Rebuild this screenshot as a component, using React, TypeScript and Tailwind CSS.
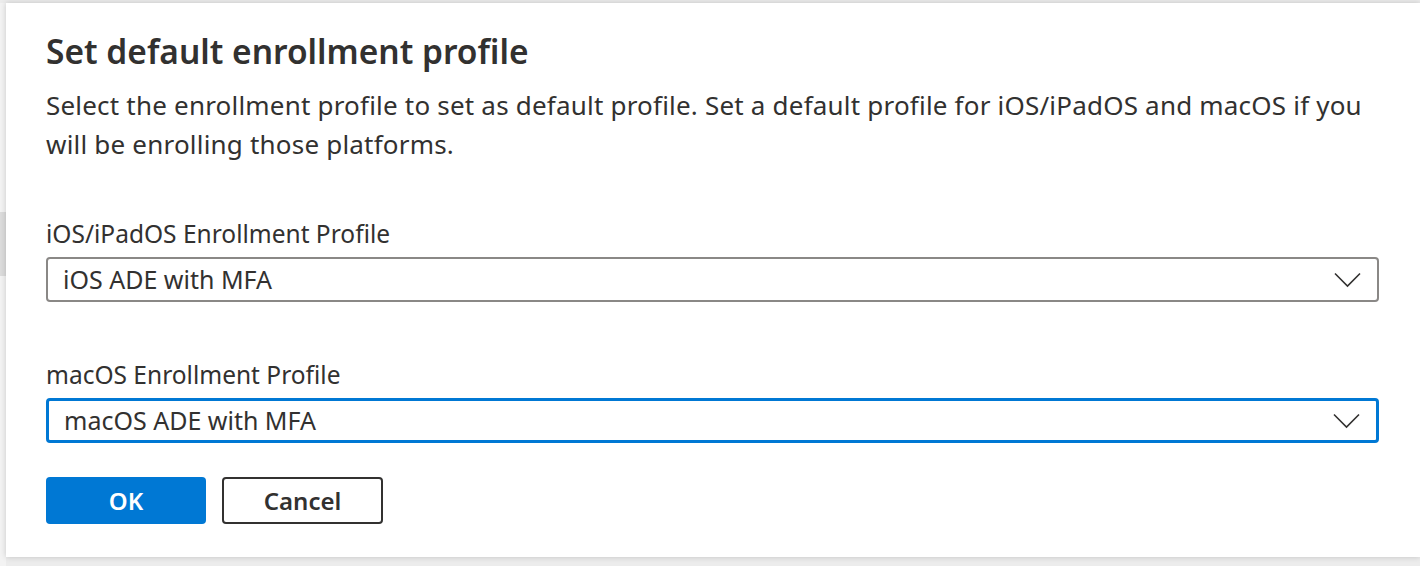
import { useState } from 'react';

const profiles = [
  { label: 'iOS/iPadOS Enrollment Profile', value: 'iOS ADE with MFA', focused: false },
  { label: 'macOS Enrollment Profile', value: 'macOS ADE with MFA', focused: true },
];

function Chevron() {
  return (
    <svg width="27" height="16" viewBox="0 0 27 16" fill="none" className="shrink-0">
      <path d="M1 1.5 L13.5 14 L26 1.5" stroke="#323130" strokeWidth="1.6" />
    </svg>
  );
}

export default function App() {
  const [values] = useState(profiles);

  return (
    <div
      className="w-[1420px] h-[566px] overflow-hidden bg-[#ececec] pt-[3px] flex"
      style={{ fontFamily: '"Noto Sans", "Open Sans", sans-serif' }}
    >
      <div className="w-[6px] shrink-0 bg-[#f3f3f3]">
        <div className="mt-[209px] h-[64px] bg-[#dcdcdc]" />
      </div>
      <div className="flex-1 h-[554px] bg-white shadow-[0_0_6px_rgba(0,0,0,0.18)] pl-[40px] pr-[41px] pt-[24px] text-[#323130]">
        <h1 className="text-[33.5px] font-semibold leading-[48px]">Set default enrollment profile</h1>
        <p className="mt-[11px] text-[26px] leading-[39px] tracking-[0.2px]">
          Select the enrollment profile to set as default profile. Set a default profile for iOS/iPadOS and macOS if you
          will be enrolling those platforms.
        </p>

        <div className="mt-[52px] flex flex-col gap-[55px]">
          {values.map((p) => (
            <div key={p.label} className="flex flex-col">
              <label className="text-[24.5px] leading-[36px]">{p.label}</label>
              <div
                className={`mt-[5px] h-[45px] flex items-center justify-between rounded-[4px] pl-[15px] pr-[16px] text-[25px] ${
                  p.focused ? 'border-[3px] border-[#0078d4]' : 'border-2 border-[#8a8886]'
                }`}
              >
                <span>{p.value}</span>
                <Chevron />
              </div>
            </div>
          ))}
        </div>

        <div className="mt-[34px] flex gap-[16px]">
          <button className="w-[160px] h-[47px] rounded-[4px] bg-[#0078d4] text-white text-[24px] font-semibold">
            OK
          </button>
          <button className="w-[161px] h-[47px] rounded-[4px] border-2 border-[#323130] bg-white text-[24px] font-semibold">
            Cancel
          </button>
        </div>
      </div>
    </div>
  );
}
